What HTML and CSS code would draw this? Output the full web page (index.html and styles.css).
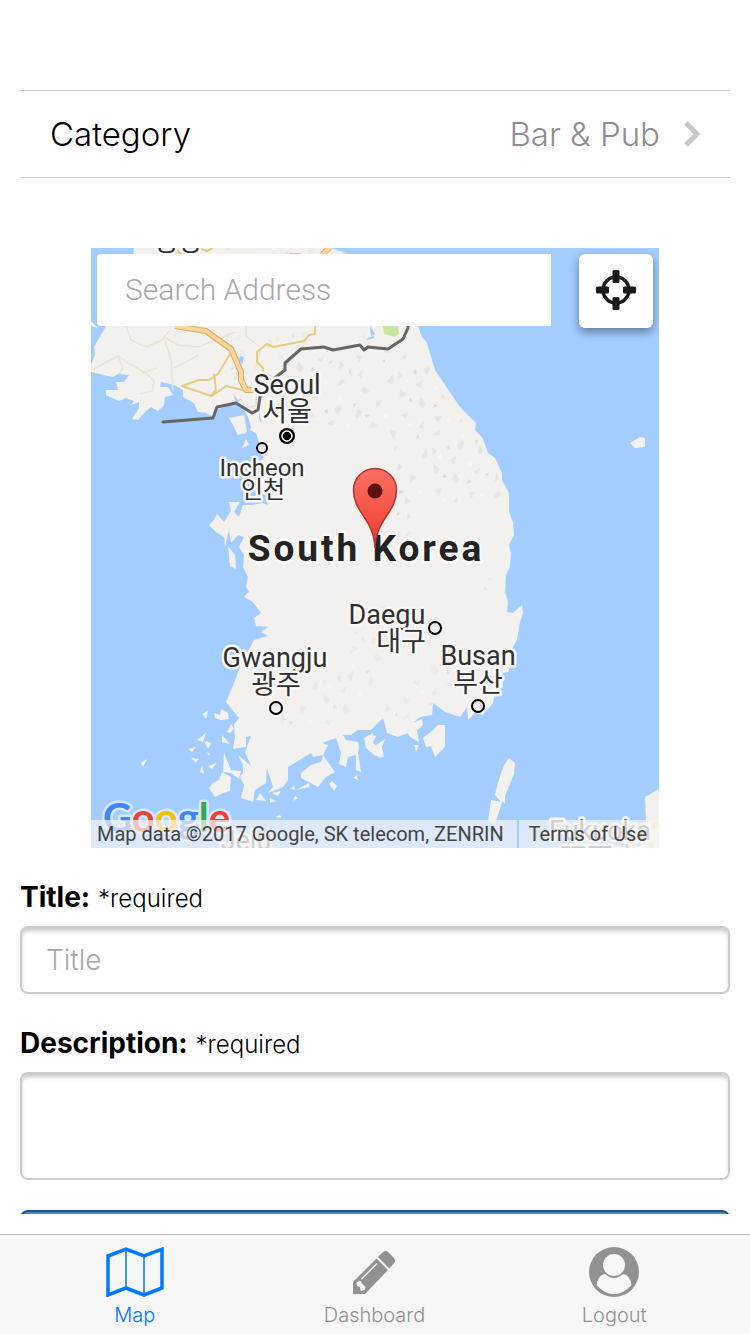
FILE: index.html
```html
<!DOCTYPE html>
<html lang="en">
<head>
<meta charset="utf-8">
<meta name="viewport" content="width=device-width, initial-scale=1">
<title>New place</title>
<link rel="stylesheet" href="styles.css">
</head>
<body>
<main class="content">
  <button class="category" type="button">
    <span class="category-name">Category</span>
    <span class="category-value">Bar &amp; Pub</span>
    <svg class="chevron" viewBox="0 0 18 26" aria-hidden="true"><path d="M2 2l11 11L2 24" /></svg>
  </button>

  <section class="map" aria-label="Map">
    <svg class="map-canvas" viewBox="91 248 568 600" preserveAspectRatio="xMidYMid slice">
      <defs>
        <linearGradient id="pin" x1="0" y1="0" x2="0" y2="1"><stop offset="0" stop-color="#fb7064"/><stop offset="1" stop-color="#f03b30"/></linearGradient>
        <linearGradient id="dot" x1="0" y1="0" x2="0" y2="1"><stop offset="0" stop-color="#ddd"/><stop offset="1" stop-color="#fff"/></linearGradient>
        <pattern id="relief" width="97" height="83" patternUnits="userSpaceOnUse" patternTransform="rotate(-24)">
          <path fill="#e6e5e2" d="M4 8l9-5-2 8-4 1zM19 3l3 6-6 2zM42 12l9-3-3 6-5 3zM74 5l5-2 2 7-6 1zM10 26l4-7 3 8-4 2zM29 22l9-1-6 7zM58 27l6-7 2 6-6 4zM84 20l6 4-9 4zM3 44l8 1-5 5zM24 41l5-5 2 9-6 2zM46 43l9-2-5 6zM71 38l4 7-8-1zM14 63l8-5-3 8zM33 59l8 3-7 4zM62 60l5-7 2 7zM84 54l6 4-6 4zM25 76l8-3-2 6zM53 75l8-5 2 5zM76 73l8-3-4 7z"/>
          <path fill="#d9d8d5" d="M32 10l4-2-2 6zM62 14l3 2-5 2zM16 35l3-3 1 5zM68 29l4 3-5 1zM36 51l3-4 1 4zM57 49l4 1-5 2zM8 71l3-2v4zM70 67l3-3-1 6z"/>
          <path fill="#f8f7f5" d="M20 14l5-1-3 5zM50 3l5 1-5 4zM44 33l5-2-2 6zM86 36l4 4-6 1zM6 55l5 1-5 3zM43 67l5-1-4 4z"/>
        </pattern>
      </defs>
      <rect class="sea" x="91" y="248" width="568" height="600"/>
      <path class="land" d="M134 248L133 256 106 326 94 347 95 355 91 365V372L104 375 113 377 118 374 129 375 124 382 116 382 118 390 106 390 106 395 119 401 126 398 134 401 131 405 139 402 139 408 132 419 138 420 146 411 151 407 158 411 164 405 165 397 173 395 168 387 160 387 161 382 174 385 183 390 183 397 194 403 198 412 206 413 213 417 216 410 224 407 234 402 243 407 248 417 251 427 250 430 256 433 259 443 258 452 264 457 258 463 262 470 254 480 266 492 268 507 274 520 278 512 288 508 287 505 273 507 263 503 251 505 243 505 239 517 234 512 240 502 229 502 231 511 224 522 217 514 214 520 209 525 216 532 224 537 225 547 229 530 231 543 238 535 244 537 239 547 244 555 243 567 248 577 246 587 249 592 244 597 253 602 261 613 254 618 256 626 268 627 261 632 268 636 254 640 241 665 234 683 226 702 239 718 234 725 235 737 233 749 246 747 246 737 251 736 245 752 251 766 238 755 243 765 243 773 240 777 244 785 241 798 253 802 255 790 266 783 267 768 273 787 268 793 283 787 288 780 288 767 311 753 313 757 323 755 321 762 311 765 301 773 301 778 318 787 326 777 335 772 323 755 328 745 322 743 336 738 341 753 339 764 346 767 348 757 356 755 356 770 361 772 358 753 359 747 358 742 346 740 343 735 351 735 358 730 371 730 383 718 387 733 398 737 408 733 410 737 419 742 417 730 423 725 422 719 413 723 420 717 432 715 433 703 445 712 460 717 467 707 468 720 475 713 483 715 493 703 495 693 503 687 503 673 508 672 513 660 513 647 517 640 520 622 523 613 522 605 513 613 507 612 508 602 505 592 506 575 510 567 511 553 509 545 514 535 513 522 509 512 509 493 502 480 502 473 495 458 488 453 482 437 475 430 476 423 460 407 435 370 427 343 422 337 418 326 346 253 331 248z"/>
      <path class="land" d="M91 321l7 7-7-2zM229 418l15-3 3 17-9 3-5-10zM235 430l11-1-1 5zM246 439l3 6-7 3zM228 546l7 9 1 14-6-3zM364 738l9-5 0 10 8 7v8l-7-3-8-7zM372 735l4 1-6 14zM376 745l9-6-3 8 2 10-9-1zM414 745l5 0-3 7zM423 738l9-7 6-6h7v22l-10 10-4-11-5 1zM504 765l5-7 6 5-1 11-9 22 0 8-5-6-5-4 4-15zM491 800l11 2-7 22-7-3zM494 794l11-2-3 11zM630 443l10-6 5 1v9l-10 1zM645 797l14-8v59h-19l6-27zM208 711l-2 8-4-5zM221 709l7 4 1 6-8 1-6-2-1-5 6 2zM227 732l4-8 3 5-4 4zM206 733l-3 9-6-2zM222 735l8 9-8-2zM204 741l7 2-3 6zM196 747l-4 5-4-3zM207 751l3 3-1 2zM199 759l-3 4-5-5zM217 763l-5 6-4-3zM224 753l7 17 10 1-2 8-8-6-8-1zM222 772l9 5-1 14-7 2-8 4-6-9 4-5 6-3zM202 766l2 7-4-1zM147 759l-4 8-2-4zM260 793l6 8-10-1zM270 798l6 3-6 2zM272 793l9-2-3 5zM309 783l1 4-14 3zM294 785l1 5-4-1zM295 796l3 2-5 3zM332 781l5 5-3 5-5-7zM357 775l1 5-5-2zM280 815l2 3-7-1z"/>
      <path fill="url(#relief)" d="M290 360L350 350 395 352 420 343 440 390 475 437 497 470 504 500 475 505 435 500 400 525 380 515 400 460 385 430 330 425 295 410 310 390z"/>
      <path fill="url(#relief)" opacity=".7" d="M375 530l35-3 20 25 -25 15-25-5zM485 580l15-5-5 25-20 10zM365 610l25-5-5 60-30 45-25 20-60-5 40-40 25-10 10-20zM395 690l45-30 60 30-5 12-50-5-45 25-30-5z"/>
      <path fill="url(#relief)" opacity=".5" d="M225 332l95 0 0 20-60 45-30-20zM160 248l170 0-20 8H150z"/>
      <path class="minor-road" d="M92 370l26-14 10 7 18 10 8 8-2 10-12 3M118 356l5 12-4 6M126 326l5 14 15 7 20-9 12 7 20 2 25-10 12-5M246 326v10l15 12-4 15M165 340l6 20 2 30M174 368l25-13M240 398l5 10 11-2 0-9M142 373l15-5M170 330l-8 10"/>
      <path class="water" d="M240 356l4 1-2 8-3-4zM233 393l5 7 4-1-6 4zM259 412l3 12-3-5zM361 331l5 8 7-3-1-6 2 8-7 2zM370 326l5 8-4 2z"/>
      <path class="park" d="M383 326h15l1 8-4 3-11-3z"/>
      <path class="road" d="M315 326v8l-6 1-5 6-31 6-6-3-10 8 0 10 6 6 1 12M230 354l-12 20-9 6-10 0-17 6 29 10 5-6-2-16M212 396l14-10 20 5M231 346l8 14M198 248l9 3 6-3M337 258l10-5M289 254l12 0"/>
      <path class="highway-edge" d="M172 248l8 8M322 255l8-8M175 326l31 5 25 18 10 23 0 8 5 10 13 0"/>
      <path class="highway" d="M172 248l8 8M322 255l8-8M175 326l31 5 25 18 10 23 0 8 5 10 13 0"/>
      <path class="highway-light" d="M659 823l-10 6-4 9-12 4-8 8M646 838l6 10"/>
      <path class="frontier" d="M163 422L213 418 217 407 236 403 252 413 258 410 260 397 276 377 285 370V363L301 349 324 347 333 350 360 345 364 350 368 347 388 349 403 339 408 328V320"/>
      <g class="city-dot">
        <circle cx="262" cy="448" r="5"/><circle cx="435" cy="628" r="6"/><circle cx="276" cy="708" r="6"/><circle cx="478" cy="706" r="6"/>
      </g>
      <circle cx="287" cy="436" r="8" fill="#000"/><circle cx="287" cy="436" r="5" fill="none" stroke="#fff" stroke-width="1.500"/>
      <g class="place">
        <text x="178" y="251">평강</text>
        <text x="287" y="394">Seoul</text><text x="287" y="421">서울</text>
        <text class="small" x="262" y="476">Incheon</text><text class="small" x="263" y="498">인천</text>
        <text x="387" y="624">Daegu</text><text x="401" y="651">대구</text>
        <text x="275" y="667">Gwangju</text><text x="276" y="694">광주</text>
        <text x="478" y="665">Busan</text><text x="478" y="692">부산</text>
        <text class="muted" x="600" y="840">Fukuoka</text><text class="muted" x="600" y="868">福岡市</text>
        <text class="muted" x="246" y="850">Jeju</text>
      </g>
      <text class="country" x="366" y="561">South Korea</text>
      <path d="M375 548C374 519 353.500 513 353.500 490A21.500 21.500 0 0 1 396.500 490C396.500 513 376 519 375 548z" fill="url(#pin)" stroke="#b3352c" stroke-width="1.500"/>
      <circle cx="375" cy="491" r="7.500" fill="#5b1111"/>
      <text class="logo" x="103" y="832"><tspan fill="#4285f4">G</tspan><tspan fill="#ea4335">o</tspan><tspan fill="#fbbc05">o</tspan><tspan fill="#4285f4">g</tspan><tspan fill="#34a853">l</tspan><tspan fill="#ea4335">e</tspan></text>
    </svg>
    <div class="map-tools">
      <input class="search" type="text" placeholder="Search Address" aria-label="Search Address">
      <button class="locate" type="button" aria-label="My location">
        <svg viewBox="0 0 40 40" aria-hidden="true"><circle cx="20" cy="20" r="13" fill="none" stroke="#1a1a1a" stroke-width="3.500"/><path fill="#1a1a1a" d="M18 0h4q1.500 0 1.500 1.500v10q0 1.500-1.500 1.500h-4q-1.500 0-1.500-1.500v-10q0-1.500 1.500-1.500zM18 27h4q1.500 0 1.500 1.500v10q0 1.500-1.500 1.500h-4q-1.500 0-1.500-1.500v-10q0-1.500 1.500-1.500zM0 18q0-1.500 1.500-1.500h10q1.500 0 1.500 1.500v4q0 1.500-1.500 1.500h-10q-1.500 0-1.500-1.500zM27 18q0-1.500 1.500-1.500h10q1.500 0 1.500 1.500v4q0 1.500-1.500 1.500h-10q-1.500 0-1.500-1.500z"/></svg>
      </button>
    </div>
    <div class="credits">
      <span class="credit">Map data ©2017 Google, SK telecom, ZENRIN</span>
      <a class="credit terms" href="#terms">Terms of Use</a>
    </div>
  </section>

  <form class="form">
    <div class="field">
      <label class="label" for="title"><b>Title:</b> <span class="required">*required</span></label>
      <input class="control" id="title" type="text" placeholder="Title">
    </div>
    <div class="field">
      <label class="label" for="description"><b>Description:</b> <span class="required">*required</span></label>
      <textarea class="control area" id="description"></textarea>
    </div>
    <button class="submit" type="button" aria-label="Submit"></button>
  </form>
</main>

<nav class="tabs">
  <a class="tab active" href="#map">
    <svg class="tab-icon" viewBox="0 0 58 50" aria-hidden="true"><path d="M2 9L20 2.200 38 9 56 2.200V41L38 48 20 41 2 48z" fill="none" stroke="currentColor" stroke-width="3.500"/><path d="M20 2v39M38 9v39" stroke="currentColor" stroke-width="1.500"/></svg>
    <span>Map</span>
  </a>
  <a class="tab" href="#dashboard">
    <svg class="tab-icon" viewBox="0 0 58 50" aria-hidden="true"><path fill="currentColor" d="M30.500 11.500L42 23 19 47H7V35zM32 10l5-5q2.500-2 5 0l6 6q2 2.500 0 5l-4.500 5.500z"/><path d="M15.500 32L31 16.500" stroke="#f7f7f7" stroke-width="1.300"/><path fill="#f7f7f7" d="M12 34.500l3 -.5 1 2.500 3.500 3.500-1 3-4 1-.5-4-3-1-.5-3z"/></svg>
    <span>Dashboard</span>
  </a>
  <a class="tab" href="#logout">
    <svg class="tab-icon" viewBox="0 0 58 50" aria-hidden="true"><circle cx="29" cy="25" r="25" fill="currentColor"/><circle cx="29" cy="18" r="11" fill="#f7f7f7"/><path fill="#f7f7f7" d="M20 27q9 8 18 0 7 1 8.500 11Q39 47 29 47T11.500 38Q13 28 20 27z"/></svg>
    <span>Logout</span>
  </a>
</nav>
</body>
</html>
```

FILE: styles.css
```css
* {
  box-sizing: border-box;
}

body {
  display: flex;
  flex-direction: column;
  height: 100vh;
  margin: 0;
  background: #fff;
  color: #000;
  font-family: Inter, "Noto Sans CJK KR", sans-serif;
}

button,
input,
textarea {
  font: inherit;
}

.content {
  flex: 1;
  min-height: 0;
  margin-bottom: 20px;
  padding: 90px 20px 0;
  overflow-y: auto;
  scrollbar-width: none;
}

.category {
  display: flex;
  align-items: center;
  width: 100%;
  height: 88px;
  padding: 0 28px 0 30px;
  border: solid #c8c7cc;
  border-width: 1px 0;
  background: none;
  color: #000;
  font-size: 33px;
  font-weight: 300;
  text-align: left;
}

.category-name {
  flex: 1;
}

.category-value {
  color: #8e8e93;
}

.chevron {
  width: 18px;
  height: 26px;
  margin-left: 24px;
  fill: none;
  stroke: #c7c7cc;
  stroke-width: 5;
}

.map {
  position: relative;
  width: 80%;
  height: 600px;
  margin: 70px auto 32px;
  overflow: hidden;
  font-family: Roboto, "Noto Sans CJK KR", sans-serif;
}

.map-canvas {
  display: block;
  width: 100%;
  height: 100%;
}

.sea,
.water {
  fill: #a3ccff;
}

.land {
  fill: #f2f1ee;
}

.park {
  fill: #c9e4a0;
}

.minor-road,
.road,
.highway,
.highway-edge,
.highway-light,
.frontier {
  fill: none;
  stroke-linejoin: round;
}

.minor-road {
  stroke: #ebe2d3;
  stroke-width: 1.5;
}

.road {
  stroke: #e8cb82;
  stroke-width: 2;
}

.highway-edge {
  stroke: #dfac66;
  stroke-width: 6;
}

.highway {
  stroke: #ffd59b;
  stroke-width: 4;
}

.highway-light {
  stroke: #fbdcae;
  stroke-width: 5;
}

.frontier {
  stroke: #666;
  stroke-width: 3;
  stroke-linecap: round;
}

.city-dot {
  fill: url(#dot);
  stroke: #000;
  stroke-width: 2;
}

.place {
  fill: #303030;
  stroke: #f7f7f5;
  stroke-width: 5;
  stroke-linejoin: round;
  paint-order: stroke;
  font-size: 27px;
  text-anchor: middle;
}

.place .small {
  font-size: 24px;
}

.place .muted {
  fill: #777;
}

.country {
  fill: #222;
  stroke: #f7f7f5;
  stroke-width: 6;
  stroke-linejoin: round;
  paint-order: stroke;
  font-size: 37px;
  font-weight: 700;
  letter-spacing: 3px;
  text-anchor: middle;
}

.logo {
  stroke: #d6e8ff;
  stroke-width: 5;
  stroke-linejoin: round;
  paint-order: stroke;
  font-family: Lato, sans-serif;
  font-size: 40px;
  font-weight: 700;
}

.map-tools {
  position: absolute;
  top: 6px;
  right: 6px;
  left: 6px;
  display: flex;
  align-items: flex-start;
  gap: 28px;
}

.search {
  flex: 1;
  min-width: 0;
  height: 72px;
  padding: 0 28px 2px;
  border: 0;
  border-radius: 4px 0 0 4px;
  background: #fff;
  font-size: 30px;
  font-weight: 300;
}

.search::placeholder,
.control::placeholder {
  color: #a9a9a9;
  opacity: 1;
}

.locate {
  display: grid;
  place-items: center;
  width: 74px;
  height: 74px;
  padding: 0 0 2px;
  border: 0;
  border-radius: 6px;
  background: #fff;
  box-shadow: 0 4px 10px rgba(0, 0, 0, 0.4);
}

.locate svg {
  width: 40px;
  height: 40px;
}

.credits {
  position: absolute;
  right: 0;
  bottom: 0;
  left: 0;
  display: flex;
  gap: 2px;
}

.credit {
  flex: 1;
  padding-left: 6px;
  background: rgba(245, 245, 245, 0.7);
  color: #444;
  font-size: 20px;
  line-height: 28px;
  white-space: nowrap;
}

.terms {
  flex: none;
  padding: 0 12px 0 10px;
  text-decoration: none;
}

.field {
  display: flex;
  flex-direction: column;
  gap: 12px;
  margin-bottom: 32px;
}

.label {
  font-size: 28px;
  line-height: 34px;
}

.required {
  font-size: 24px;
  font-weight: 300;
  line-height: 24px;
}

.control {
  width: 100%;
  height: 68px;
  padding: 0 24px;
  border: 2px solid #ccc;
  border-radius: 8px;
  background: #fff;
  box-shadow: inset 0 4px 4px -1px rgba(0, 0, 0, 0.22);
  font-size: 28px;
  font-weight: 300;
}

.area {
  height: 108px;
  padding: 14px 24px;
  resize: none;
}

.submit {
  display: block;
  width: 100%;
  height: 70px;
  margin-top: -2px;
  border: 2px solid #245580;
  border-radius: 8px;
  background: #428bca;
}

.tabs {
  display: flex;
  flex: none;
  height: 100px;
  padding: 0 16px 0 15px;
  border-top: 1px solid #b8b8bb;
  background: #f7f7f7;
}

.tab {
  display: flex;
  flex: 1;
  flex-direction: column;
  align-items: center;
  gap: 6px;
  padding-top: 12px;
  color: #929292;
  font-size: 20px;
  font-weight: 300;
  line-height: 24px;
  text-decoration: none;
}

.active {
  color: #007aff;
}

.tab-icon {
  width: 58px;
  height: 50px;
}
```
